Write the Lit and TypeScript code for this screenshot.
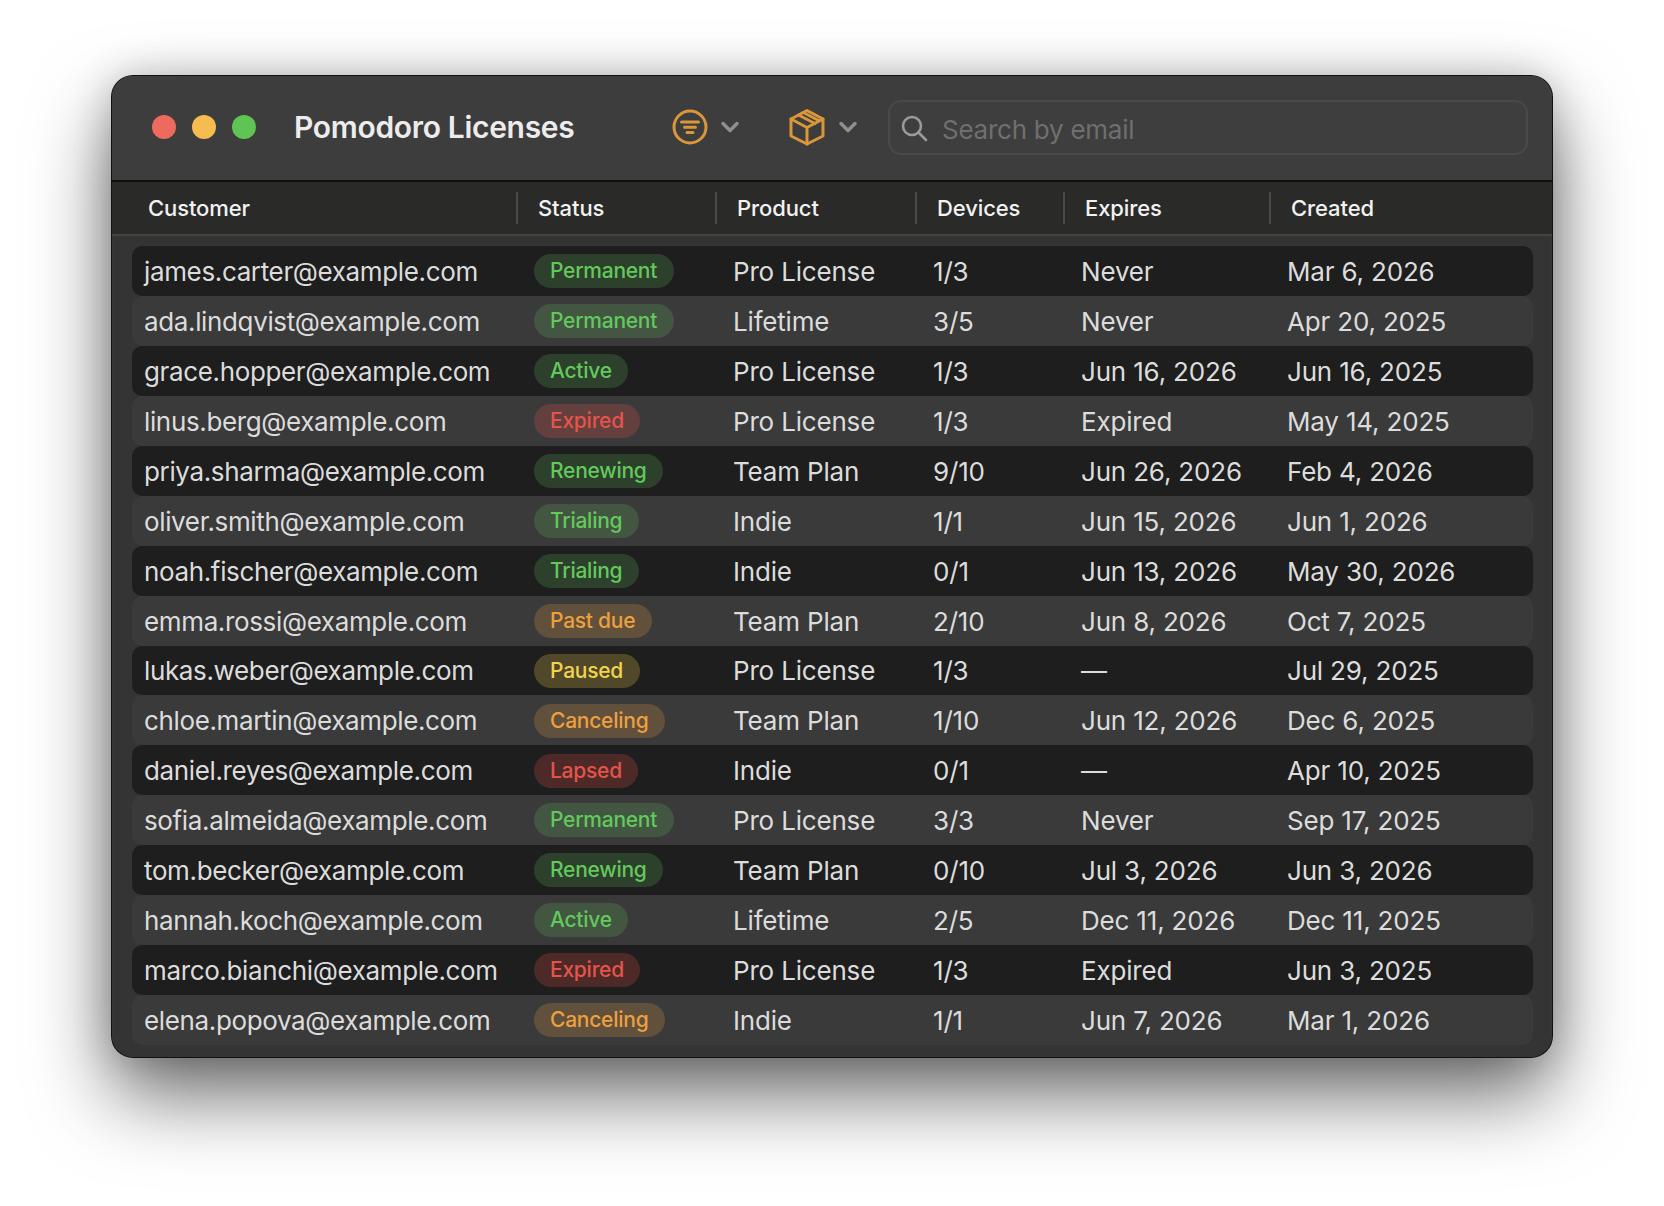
import { LitElement, html, css } from "lit";
import { customElement } from "lit/decorators.js";

type Row = [string, string, string, string, string, string];
const rows: Row[] = [
  ["james.carter@example.com", "Permanent", "Pro License", "1/3", "Never", "Mar 6, 2026"],
  ["ada.lindqvist@example.com", "Permanent", "Lifetime", "3/5", "Never", "Apr 20, 2025"],
  ["grace.hopper@example.com", "Active", "Pro License", "1/3", "Jun 16, 2026", "Jun 16, 2025"],
  ["linus.berg@example.com", "Expired", "Pro License", "1/3", "Expired", "May 14, 2025"],
  ["priya.sharma@example.com", "Renewing", "Team Plan", "9/10", "Jun 26, 2026", "Feb 4, 2026"],
  ["oliver.smith@example.com", "Trialing", "Indie", "1/1", "Jun 15, 2026", "Jun 1, 2026"],
  ["noah.fischer@example.com", "Trialing", "Indie", "0/1", "Jun 13, 2026", "May 30, 2026"],
  ["emma.rossi@example.com", "Past due", "Team Plan", "2/10", "Jun 8, 2026", "Oct 7, 2025"],
  ["lukas.weber@example.com", "Paused", "Pro License", "1/3", "—", "Jul 29, 2025"],
  ["chloe.martin@example.com", "Canceling", "Team Plan", "1/10", "Jun 12, 2026", "Dec 6, 2025"],
  ["daniel.reyes@example.com", "Lapsed", "Indie", "0/1", "—", "Apr 10, 2025"],
  ["sofia.almeida@example.com", "Permanent", "Pro License", "3/3", "Never", "Sep 17, 2025"],
  ["tom.becker@example.com", "Renewing", "Team Plan", "0/10", "Jul 3, 2026", "Jun 3, 2026"],
  ["hannah.koch@example.com", "Active", "Lifetime", "2/5", "Dec 11, 2026", "Dec 11, 2025"],
  ["marco.bianchi@example.com", "Expired", "Pro License", "1/3", "Expired", "Jun 3, 2025"],
  ["elena.popova@example.com", "Canceling", "Indie", "1/1", "Jun 7, 2026", "Mar 1, 2026"],
];
const tone: Record<string, string> = {
  Permanent: "green", Active: "green", Renewing: "green", Trialing: "green",
  Expired: "red", Lapsed: "red", "Past due": "orange", Canceling: "orange", Paused: "yellow",
};
const heads = ["Customer", "Status", "Product", "Devices", "Expires", "Created"];

@customElement("app-root")
export class AppRoot extends LitElement {
  static styles = css`
    :host { display: block; width: 1664px; height: 1206px; padding: 76px 112px 0; box-sizing: border-box; background: #fff; font-family: Inter, "Liberation Sans", sans-serif; overflow: hidden; }
    .win { width: 1440px; height: 981px; box-sizing: border-box; border-radius: 21px; background: #343434; box-shadow: 0 0 0 1px #111, inset 0 1px 1px rgba(255,255,255,.22), 0 38px 80px rgba(0,0,0,.58), 0 0 40px rgba(0,0,0,.2); overflow: hidden; }
    .bar { height: 106px; box-sizing: border-box; background: #3d3d3d; display: flex; align-items: center; padding: 0 24px 2px 40px; border-bottom: 2px solid #101010; }
    .lights { display: flex; gap: 16px; }
    .lights i { width: 24px; height: 24px; border-radius: 50%; display: block; }
    .r { background: #ee6a5f; } .y { background: #f5bd4f; } .g { background: #5fc454; }
    h1 { margin: 0 0 0 38px; width: 377px; font-size: 30px; font-weight: 600; letter-spacing: -.32px; color: #ececec; white-space: nowrap; }
    .icn { display: block; flex: none; }
    .filter { width: 38px; height: 38px; }
    .chev { width: 20px; height: 14px; margin-left: 11px; }
    .box { width: 40px; height: 40px; margin-left: 47px; }
    .chev2 { margin-left: 11px; }
    .search { margin: 1px 0 0 30px; flex: 1; height: 55px; box-sizing: border-box; border: 2px solid #494949; border-radius: 13px; display: flex; align-items: center; padding-left: 10px; gap: 14px; font-size: 26px; letter-spacing: -.25px; color: #6f6f6f; background: #3e3e3e; }
    .search svg { width: 28px; height: 28px; }
    .search span { padding-top: 4px; }
    .grid { display: grid; grid-template-columns: 390px 199px 200px 148px 206px 1fr; align-items: center; }
    .head { height: 54px; box-sizing: border-box; background: #2a2a28; border-bottom: 2px solid #444; padding-left: 36px; color: #f2f2f2; font-size: 22px; font-weight: 500; letter-spacing: -.1px; }
    .head div { height: 32px; display: flex; align-items: center; position: relative; }
    .head div + div::before { content: ""; position: absolute; left: -22px; top: 0; bottom: 0; width: 2px; background: #4a4a4a; }
    .list { padding: 10px 19px 0 20px; }
    .row { height: 49.95px; box-sizing: border-box; border-radius: 10px; padding: 1px 0 0 12px; color: #dcdcdc; font-size: 26px; letter-spacing: -.18px; }
    .row:nth-child(odd) { background: #1e1e1e; }
    .row:nth-child(even) { background: #3a3a3a; }
    .row > div { white-space: nowrap; }
    .row > .email { letter-spacing: -.36px; }
    .pill { display: inline-block; height: 34px; line-height: 33px; border-radius: 17px; padding: 0 16.500px 0 16px; font-size: 21px; font-weight: 500; letter-spacing: -.25px; vertical-align: middle; margin-top: -3px; }
    .green { color: #63c95d; background: rgba(99,201,93,.2); }
    .red { color: #e5544b; background: rgba(229,84,75,.24); }
    .orange { color: #eda03f; background: rgba(237,160,63,.22); }
    .yellow { color: #f2d34f; background: rgba(242,211,79,.24); }
  `;
  render() {
    return html`<div class="win">
      <div class="bar">
        <div class="lights"><i class="r"></i><i class="y"></i><i class="g"></i></div>
        <h1>Pomodoro Licenses</h1>
        <svg class="icn filter" viewBox="0 0 38 38" fill="none" stroke="#d9963a" stroke-width="3" stroke-linecap="round"><circle cx="19" cy="19" r="16"/><path d="M10.500 14h17M13.500 19.300h11M16 24.600h6"/></svg>
        <svg class="icn chev" viewBox="0 0 20 14" fill="none" stroke="#8f8f8f" stroke-width="3.500" stroke-linecap="round" stroke-linejoin="round"><path d="M3 3.500l7 7 7-7"/></svg>
        <svg class="icn box" viewBox="0 0 40 40" fill="none" stroke="#d9963a" stroke-width="3" stroke-linejoin="round" stroke-linecap="round"><path d="M20 3.500L36 12v17L20 37 4 29V12z"/><path d="M4 12l16 8.500 16-8.500M20 20.500V37M11.500 8L28 16.500M16.500 5.500L32.500 14"/></svg>
        <svg class="icn chev chev2" viewBox="0 0 20 14" fill="none" stroke="#8f8f8f" stroke-width="3.500" stroke-linecap="round" stroke-linejoin="round"><path d="M3 3.500l7 7 7-7"/></svg>
        <div class="search">
          <svg class="icn" viewBox="0 0 28 28" fill="none" stroke="#9a9a9a" stroke-width="2.600" stroke-linecap="round"><circle cx="12" cy="12" r="9"/><path d="M18.500 18.500L26 26"/></svg>
          <span>Search by email</span>
        </div>
      </div>
      <div class="grid head">${heads.map((h) => html`<div>${h}</div>`)}</div>
      <div class="list">
        ${rows.map((r) => html`<div class="grid row">
          <div class="email">${r[0]}</div>
          <div><span class="pill ${tone[r[1]]}">${r[1]}</span></div>
          <div>${r[2]}</div><div>${r[3]}</div><div>${r[4]}</div><div>${r[5]}</div>
        </div>`)}
      </div>
    </div>`;
  }
}
